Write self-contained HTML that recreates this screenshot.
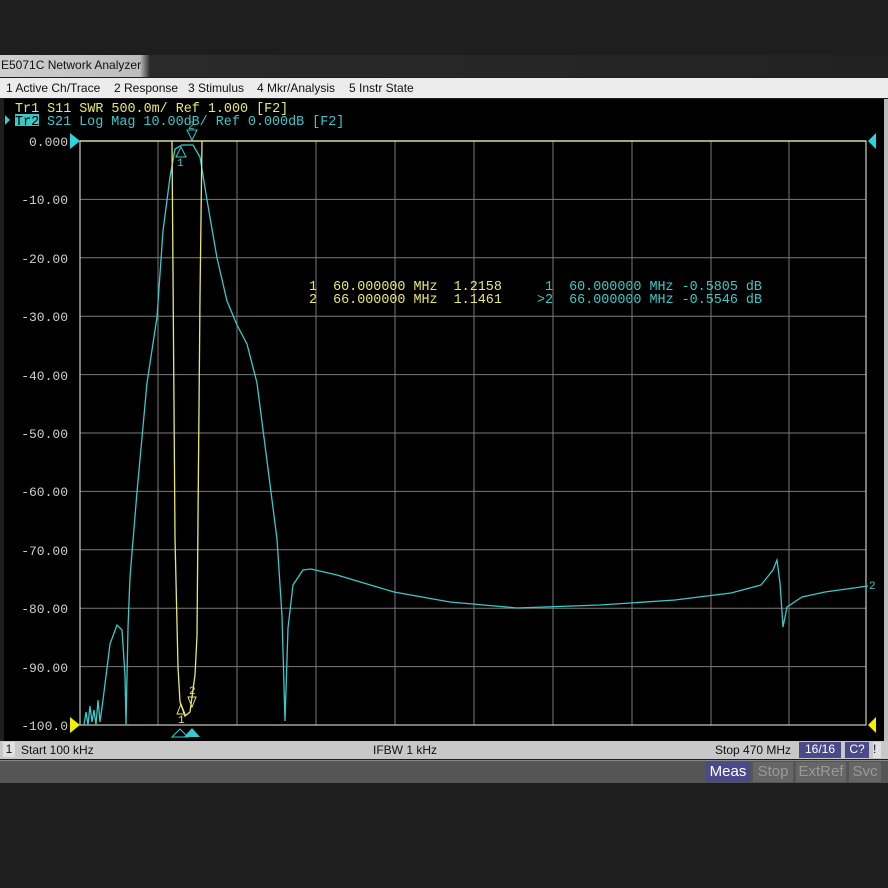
<!DOCTYPE html>
<html><head><meta charset="utf-8"><style>
html,body{margin:0;padding:0;width:888px;height:888px;background:#1e1e1e;overflow:hidden;position:relative;font-family:"Liberation Sans",sans-serif}
.abs{position:absolute}
.title{left:0;top:55px;width:888px;height:22px;background:linear-gradient(90deg,#cfcfcf 0,#bdbdbd 140px,#2a2a2a 150px,#222 100%);}
.title span{position:absolute;left:1px;top:3px;font-size:12px;color:#111}
.menu{left:0;top:78px;width:888px;height:20px;background:#ececec;font-size:12px;color:#111}
.menu span{position:absolute;top:3px}
.plot{left:4px;top:99px;width:880px;height:642px;background:#000}
.status{left:0;top:741px;width:888px;height:18px;background:#c8c8c8;font-size:12px;color:#111}
.status span{position:absolute;top:2px}
.bar2{left:0;top:760px;width:888px;height:22px;background:#555;border-top:1px solid #888}
</style></head><body>
<div class="abs title"><span>E5071C Network Analyzer</span></div>
<div class="abs menu">
<span style="left:6px">1 Active Ch/Trace</span><span style="left:114px">2 Response</span><span style="left:188px">3 Stimulus</span><span style="left:257px">4 Mkr/Analysis</span><span style="left:349px">5 Instr State</span>
</div>
<div class="abs" style="left:884px;top:99px;width:4px;height:642px;background:#bbb"></div>
<div class="abs plot"></div>
<svg class="abs" style="left:0;top:0" width="888" height="760" xmlns="http://www.w3.org/2000/svg">
<g stroke="#7a7a7a" stroke-width="1">
<line x1="158" y1="141" x2="158" y2="725"/><line x1="237" y1="141" x2="237" y2="725"/><line x1="316" y1="141" x2="316" y2="725"/><line x1="395" y1="141" x2="395" y2="725"/><line x1="474" y1="141" x2="474" y2="725"/><line x1="553" y1="141" x2="553" y2="725"/><line x1="632" y1="141" x2="632" y2="725"/><line x1="711" y1="141" x2="711" y2="725"/><line x1="789" y1="141" x2="789" y2="725"/>
<line x1="80" y1="199.4" x2="866" y2="199.4"/><line x1="80" y1="257.8" x2="866" y2="257.8"/><line x1="80" y1="316.2" x2="866" y2="316.2"/><line x1="80" y1="374.6" x2="866" y2="374.6"/><line x1="80" y1="433" x2="866" y2="433"/><line x1="80" y1="491.4" x2="866" y2="491.4"/><line x1="80" y1="549.8" x2="866" y2="549.8"/><line x1="80" y1="608.2" x2="866" y2="608.2"/><line x1="80" y1="666.6" x2="866" y2="666.6"/>
</g>
<rect x="80" y="141" width="786" height="584" fill="none" stroke="#ccc" stroke-width="1.2"/>
<line x1="80" y1="141" x2="866" y2="141" stroke="#eef0a0" stroke-width="1.2"/>
<g font-family="Liberation Mono,monospace" font-size="13" fill="#cfcfcf" text-anchor="end">
<text x="68" y="146">0.000</text><text x="68" y="204">-10.00</text><text x="68" y="263">-20.00</text><text x="68" y="321">-30.00</text><text x="68" y="380">-40.00</text><text x="68" y="438">-50.00</text><text x="68" y="496">-60.00</text><text x="68" y="555">-70.00</text><text x="68" y="613">-80.00</text><text x="68" y="672">-90.00</text><text x="68" y="730">-100.0</text>
</g>
<polygon points="70,133 80,141 70,149" fill="#29d6e0"/>
<polygon points="876,133 868,141 876,149" fill="#29d6e0"/>
<polygon points="70,717 80,725 70,733" fill="#f0f000"/>
<polygon points="876,717 868,725 876,733" fill="#f0f000"/>
<polyline fill="none" stroke="#3cc8c8" stroke-width="1.3" points="84,725 86,712 88,725 90,706 92,722 94,710 96,725 98,700 100,722 103,700 110,644 117,625 122,630 125,675 126,725 128,628 130,577 137,492 147,383 157,317 163,231 170,177 175,149 182,145 193,145 200,157 207,200 217,258 227,301 237,325 247,344 257,383 267,461 277,539 282,616 285,721 288,628 293,585 303,570 311,569 337,575 394,592 450,602 517,608 600,605 675,600 731,593 761,585 773,570 777,560 780,583 783,627 787,607 802,597 825,592 868,586"/>
<polyline fill="none" stroke="#e8e870" stroke-width="1.3" points="172,141 175,538 178,667 180,702 185,716 190,712 195,675 197,636 198,519 200,297 202,141"/>
<g font-family="Liberation Mono,monospace" font-size="11">
<text x="177" y="166" fill="#3cc8c8">1</text>
<polygon points="176,157 181,147 186,157" fill="none" stroke="#3cc8c8"/>
<polygon points="187,130 192,140 197,130" fill="none" stroke="#3cc8c8"/>
<text x="188" y="129" fill="#3cc8c8">2</text>
<polygon points="177,714 181,704 185,714" fill="none" stroke="#e8e870"/>
<text x="178" y="723" fill="#e8e870">1</text>
<polygon points="188,697 192,707 196,697" fill="none" stroke="#e8e870"/>
<text x="189" y="694" fill="#e8e870">2</text>
<text x="869" y="589" fill="#3cc8c8">2</text>
</g>
<polygon points="172,737 180,729 188,737" fill="none" stroke="#3cc8c8"/>
<polygon points="184,737 192,728 200,737" fill="#3cc8c8"/>
<g font-family="Liberation Mono,monospace" font-size="13.4">
<text x="15" y="112" fill="#e8e870" xml:space="preserve">Tr1 S11 SWR 500.0m/ Ref 1.000 [F2]</text>
<rect x="15" y="114" width="24" height="12" fill="#3cc8c8"/>
<polygon points="5,115 10,120 5,125" fill="#3cc8c8"/>
<text x="15" y="125" fill="#000">Tr2</text>
<text x="47" y="125" fill="#3cc8c8" xml:space="preserve">S21 Log Mag 10.00dB/ Ref 0.000dB [F2]</text>
<text x="309" y="290" fill="#e8e870" xml:space="preserve">1  60.000000 MHz  1.2158</text>
<text x="309" y="303" fill="#e8e870" xml:space="preserve">2  66.000000 MHz  1.1461</text>
<text x="545" y="290" fill="#3cc8c8" xml:space="preserve">1  60.000000 MHz -0.5805 dB</text>
<text x="537" y="303" fill="#3cc8c8" xml:space="preserve">&gt;2  66.000000 MHz -0.5546 dB</text>
</g>
</svg>
<div class="abs status">
<span style="left:3px;top:1px;width:12px;height:15px;background:#e0e0e0;text-align:center">1</span>
<span style="left:21px">Start 100 kHz</span>
<span style="left:373px">IFBW 1 kHz</span>
<span style="left:715px">Stop 470 MHz</span>
<span style="left:799px;top:1px;width:42px;height:16px;background:#4a4a8a;color:#fff;text-align:center">16/16</span>
<span style="left:845px;top:1px;width:24px;height:16px;background:#4a4a8a;color:#fff;text-align:center">C?</span>
<span style="left:873px;top:1px;width:8px;height:16px;background:#e0e0e0">!</span>
</div>
<div class="abs bar2">
<div class="abs" style="left:706px;top:1px;width:44px;height:20px;background:#4a4a8a;color:#fff;font-size:15px;text-align:center;line-height:20px">Meas</div>
<div class="abs" style="left:753px;top:1px;width:40px;height:20px;background:#666;color:#999;font-size:15px;text-align:center;line-height:20px">Stop</div>
<div class="abs" style="left:796px;top:1px;width:50px;height:20px;background:#666;color:#999;font-size:15px;text-align:center;line-height:20px">ExtRef</div>
<div class="abs" style="left:849px;top:1px;width:32px;height:20px;background:#666;color:#999;font-size:15px;text-align:center;line-height:20px">Svc</div>
</div>
</body></html>
